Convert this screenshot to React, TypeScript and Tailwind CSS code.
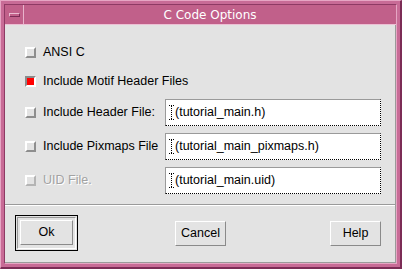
import type { ReactNode } from 'react'

const label = { fontFamily: '"Liberation Sans", Arial, sans-serif' }

function Check({ on, dim }: { on?: boolean; dim?: boolean }) {
  if (on) {
    return (
      <div className="w-[11px] h-[11px] shrink-0 border-2 border-t-[#8a8a8a] border-l-[#8a8a8a] border-b-white border-r-white bg-[#ff0000]" />
    )
  }
  return (
    <div
      className={
        dim
          ? 'w-[11px] h-[11px] shrink-0 border-2 border-t-white border-l-white border-b-[#b4b4b4] border-r-[#b4b4b4] bg-[#e3e3e3]'
          : 'w-[11px] h-[11px] shrink-0 border-2 border-t-white border-l-white border-b-[#8e8e8e] border-r-[#8e8e8e] bg-[#e3e3e3]'
      }
    />
  )
}

function Cursor() {
  return (
    <svg width="5" height="15" viewBox="0 0 5 15" className="shrink-0">
      <g stroke="#000" strokeWidth="1" strokeDasharray="1 1" fill="none">
        <path d="M0 0.5H5M0 14.5H5M2.5 1V14" />
      </g>
    </svg>
  )
}

function Field({ value }: { value: string }) {
  return (
    <div className="w-[216px] h-[27px] bg-white flex items-center pl-[3px] gap-[1px] border border-t-[#9a9a9a] border-l-[#9a9a9a] border-r-black border-b-black [border-right-style:dotted] [border-bottom-style:dotted]">
      <Cursor />
      <span className="text-[12.5px] text-black leading-none whitespace-nowrap" style={label}>
        {value}
      </span>
    </div>
  )
}

function Row({ children, on, dim, field, cls }: { children: ReactNode; on?: boolean; dim?: boolean; field?: string; cls: string }) {
  return (
    <div className={'flex items-center pl-[20px] ' + cls}>
      <Check on={on} dim={dim} />
      <div className={(field ? 'w-[122px] ' : '') + 'ml-[7px] text-[12.5px] leading-none whitespace-nowrap text-black'} style={label}>
        {children}
      </div>
      {field && <Field value={field} />}
    </div>
  )
}

function Btn({ children, w }: { children: ReactNode; w: string }) {
  return (
    <div
      className={
        w +
        ' h-[25px] flex items-center justify-center bg-[#e3e3e3] border border-t-white border-l-white border-b-[#8a8a8a] border-r-[#8a8a8a] text-[12.5px] text-black'
      }
      style={label}
    >
      {children}
    </div>
  )
}

export default function App() {
  return (
    <div className="w-[402px] h-[269px] bg-[#c86b96] border-t border-l border-t-[#e6a6c4] border-l-[#e6a6c4] border-r-2 border-b-2 border-r-[#7c2c56] border-b-[#7c2c56] p-[3px]">
      <div className="w-full h-full flex flex-col border border-t-[#8e3a64] border-l-[#8e3a64] border-r-[#e6a6c4] border-b-[#e6a6c4]">
        {/* title bar */}
        <div className="h-[20px] flex bg-[#c1608a] border-b border-b-[#ecc0d4]">
          <div className="w-[19px] h-full flex items-center justify-center border-r border-r-[#e9b4cc]">
            <div className="w-[11px] h-[4px] bg-[#c1608a] border border-t-[#ecbcd2] border-l-[#ecbcd2] border-b-[#7c2c56] border-r-[#7c2c56]" />
          </div>
          <div className="flex-1 flex items-center justify-center text-white text-[12px]" style={{ fontFamily: '"DejaVu Sans", sans-serif' }}>
            C Code Options
          </div>
        </div>

        {/* content */}
        <div className="flex-1 flex flex-col bg-[#e3e3e3] border-r border-r-[#9a9a9a] border-b border-b-[#9a9a9a]">
          <Row cls="mt-[13px] h-[28px]">ANSI C</Row>
          <Row cls="h-[28px] mt-[1px]" on>
            Include Motif Header Files
          </Row>
          <Row cls="mt-[4px]" field="(tutorial_main.h)">
            Include Header File:
          </Row>
          <Row cls="mt-[7px]" field="(tutorial_main_pixmaps.h)">
            Include Pixmaps File
          </Row>
          <Row cls="mt-[7px]" dim field="(tutorial_main.uid)">
            <span className="text-[#a2a2a2] [text-shadow:1px_1px_0_#ffffff]">UID File.</span>
          </Row>

          <div className="mt-[10px] h-[2px] border-t border-t-[#9a9a9a] border-b border-b-white" />

          <div className="flex items-center mt-[9px]">
            <div className="ml-[10px] w-[63px] h-[36px] border border-black p-[1px]">
              <div className="w-full h-full border border-t-[#9a9a9a] border-l-[#9a9a9a] border-b-white border-r-white p-[2px] flex">
                <Btn w="w-full">Ok</Btn>
              </div>
            </div>
            <div className="ml-[97px]">
              <Btn w="w-[51px]">Cancel</Btn>
            </div>
            <div className="ml-auto mr-[14px]">
              <Btn w="w-[51px]">Help</Btn>
            </div>
          </div>
        </div>
      </div>
    </div>
  )
}
